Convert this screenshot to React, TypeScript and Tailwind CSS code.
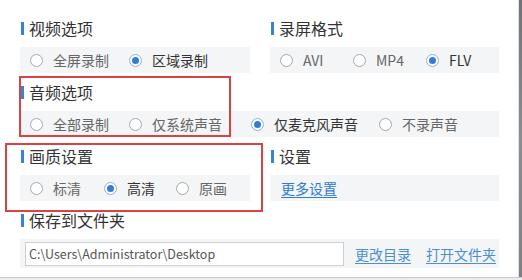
import React from "react";

const FONT = '"Noto Sans CJK SC", "Noto Sans", sans-serif';

function Radio({ checked }: { checked?: boolean }) {
  return checked ? (
    <span className="flex items-center justify-center w-[13px] h-[13px] rounded-full border border-[#8fb3dc] bg-white shrink-0">
      <span className="w-[7px] h-[7px] rounded-full bg-[#2f7fd6]" />
    </span>
  ) : (
    <span className="w-[13px] h-[13px] rounded-full border border-[#a8a8a8] bg-white shrink-0" />
  );
}

function Option({ label, checked, w }: { label: string; checked?: boolean; w?: string }) {
  return (
    <div className={`flex items-center shrink-0 ${w ?? ""}`}>
      <Radio checked={checked} />
      <span className={`ml-[10px] text-[14px] leading-[20px] ${checked ? "text-[#333333]" : "text-[#666666]"}`}>
        {label}
      </span>
    </div>
  );
}

function Title({ text }: { text: string }) {
  return (
    <div className="flex items-center h-[20px]">
      <span className="w-[3px] h-[13px] bg-[#3583d3] ml-[1px]" />
      <span className="ml-[5px] text-[16px] leading-[20px] text-[#333333]">{text}</span>
    </div>
  );
}

function Box({ children, className }: { children: React.ReactNode; className?: string }) {
  return (
    <div className={`mt-[9px] h-[26px] bg-[#f4f5f7] flex items-center pl-[10px] ${className ?? ""}`}>
      {children}
    </div>
  );
}

export default function App() {
  return (
    <div className="relative w-[522px] h-[280px] bg-white overflow-hidden flex flex-col" style={{ fontFamily: FONT }}>
      <div className="flex h-[277px]">
        <div className="flex-1 pt-[18px] pl-[20px] flex flex-col gap-[9px]">
          <div className="grid grid-cols-[230px_229px] gap-x-[20px]">
            <div>
              <Title text="视频选项" />
              <Box>
                <Option label="全屏录制" w="w-[99px]" />
                <Option label="区域录制" checked />
              </Box>
            </div>
            <div>
              <Title text="录屏格式" />
              <Box>
                <Option label="AVI" w="w-[73px]" />
                <Option label="MP4" w="w-[73px]" />
                <Option label="FLV" checked />
              </Box>
            </div>
          </div>

          <div className="w-[479px]">
            <Title text="音频选项" />
            <Box>
              <Option label="全部录制" w="w-[99px]" />
              <Option label="仅系统声音" w="w-[122px]" />
              <Option label="仅麦克风声音" checked w="w-[128px]" />
              <Option label="不录声音" />
            </Box>
          </div>

          <div className="grid grid-cols-[230px_229px] gap-x-[20px]">
            <div>
              <Title text="画质设置" />
              <Box>
                <Option label="标清" w="w-[74px]" />
                <Option label="高清" checked w="w-[72px]" />
                <Option label="原画" />
              </Box>
            </div>
            <div>
              <Title text="设置" />
              <Box className="pl-[11px]">
                <a className="text-[14px] leading-[20px] text-[#2f7bd0] underline underline-offset-[3px]">更多设置</a>
              </Box>
            </div>
          </div>

          <div className="w-[479px]">
            <Title text="保存到文件夹" />
            <div className="mt-[9px] h-[29px] bg-[#f4f5f7] flex items-center pl-[5px]">
              <div className="w-[319px] h-[24px] bg-white border border-[#cfcfcf] flex items-center pl-[3px]">
                <span className="text-[12.5px] leading-[20px] text-[#555555]">C:\Users\Administrator\Desktop</span>
              </div>
              <a className="ml-[11px] text-[14px] leading-[20px] text-[#4a8fd6] underline underline-offset-[3px]">更改目录</a>
              <a className="ml-[15px] text-[14px] leading-[20px] text-[#4a8fd6] underline underline-offset-[3px]">打开文件夹</a>
            </div>
          </div>
        </div>
        <div className="w-[1px] bg-[#e2e2e2]" />
        <div className="w-[3px] bg-gradient-to-b from-[#6f7278] via-[#8a8d92] to-[#7d8086]" />
      </div>
      <div className="h-[1px] bg-[#c9c9c9]" />
      <div className="flex-1 bg-[#ececec]" />

      <div className="absolute left-[19px] top-[76px] w-[212px] h-[61px] border-2 border-[#d94343]" />
      <div className="absolute left-[5px] top-[143px] w-[258px] h-[69px] border-2 border-[#d94343]" />
    </div>
  );
}
